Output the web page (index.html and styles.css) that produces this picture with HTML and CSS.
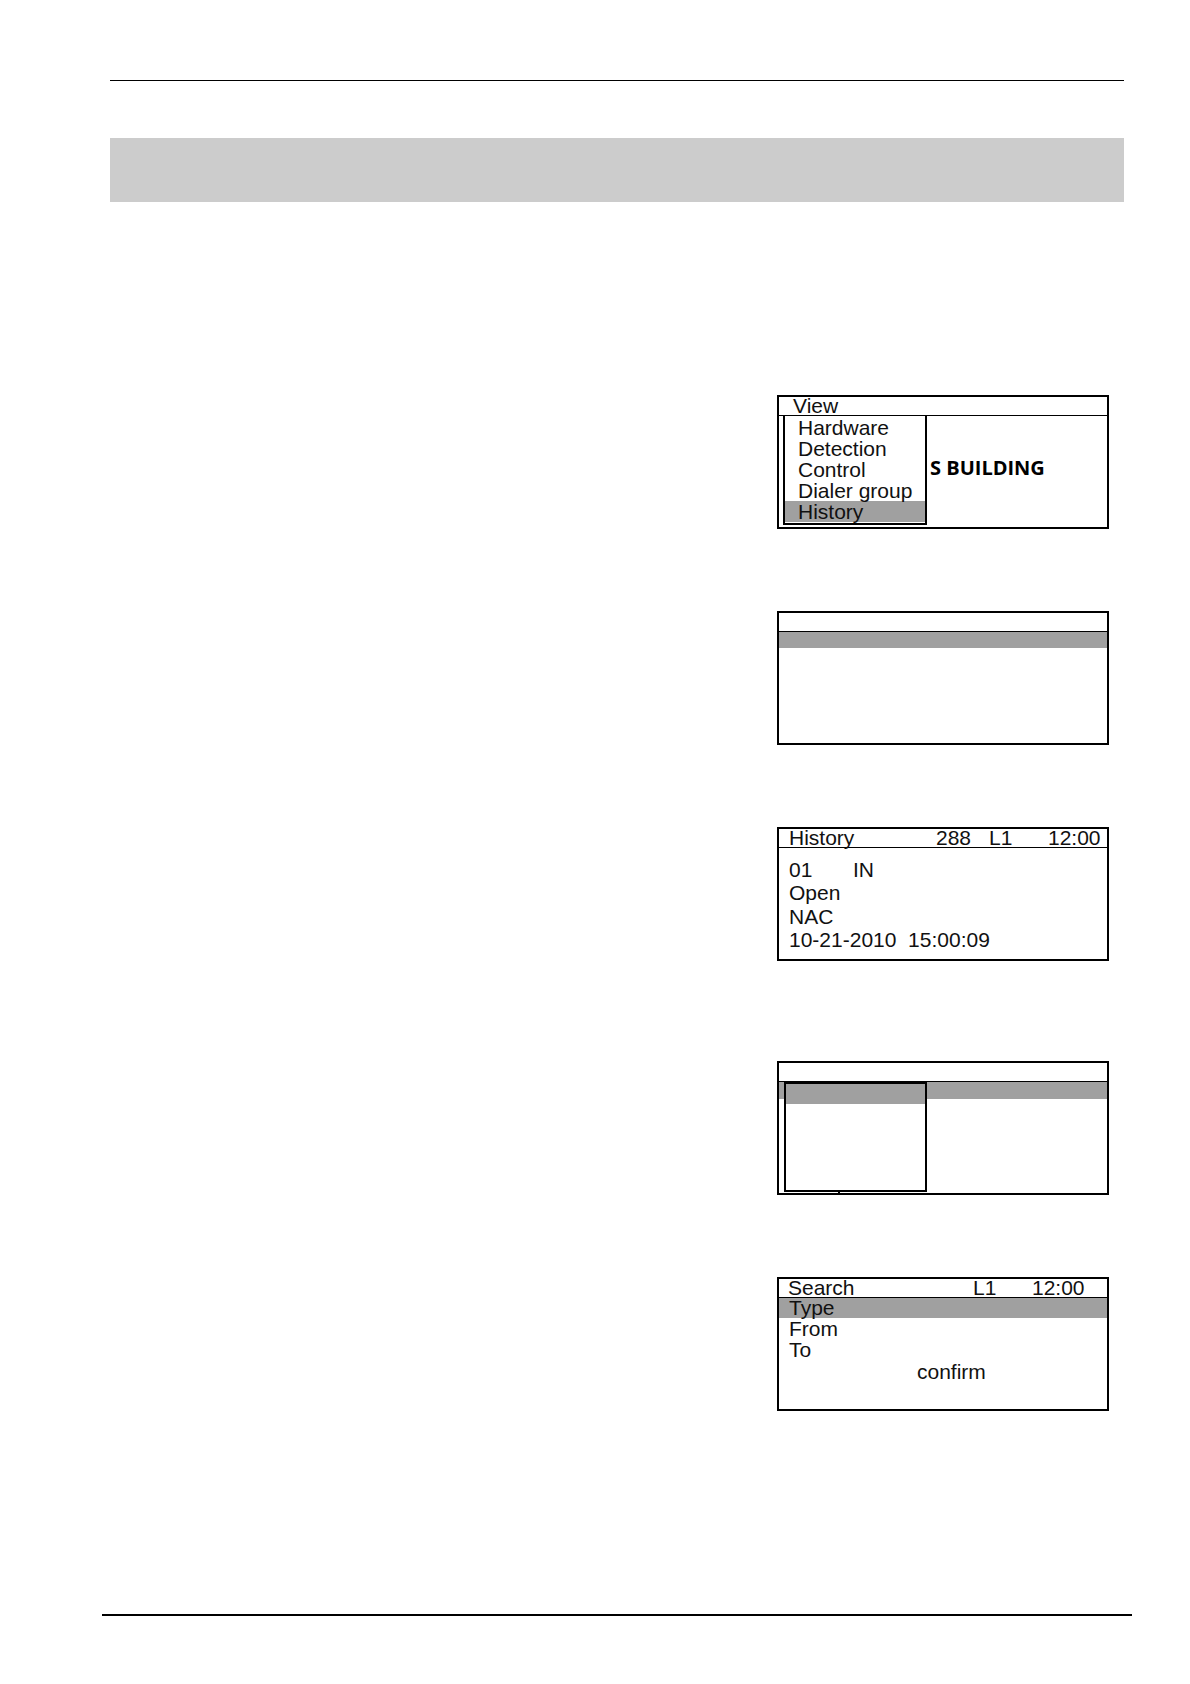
FILE: index.html
```html
<!DOCTYPE html>
<html lang="en">
<head>
<meta charset="utf-8">
<title>History menu screens</title>
<link rel="stylesheet" href="styles.css">
</head>
<body>
<div class="page">
  <div class="top-rule"></div>
  <div class="title-bar"></div>

  <div class="screens">
    <!-- Screen 1: View menu -->
    <div class="screen">
      <div class="screen-head head-view">View</div>
      <div class="screen-body body-menu">
        <ul class="menu">
          <li>Hardware</li>
          <li>Detection</li>
          <li>Control</li>
          <li>Dialer group</li>
          <li class="is-selected">History</li>
        </ul>
        <div class="building">S BUILDING</div>
      </div>
    </div>

    <!-- Screen 2: blank list -->
    <div class="screen">
      <div class="screen-head"></div>
      <div class="screen-body">
        <div class="bar bar-16"></div>
      </div>
    </div>

    <!-- Screen 3: History record -->
    <div class="screen">
      <div class="screen-head head-history">
        <span>History</span><span>288</span><span>L1</span><span>12:00</span>
      </div>
      <div class="screen-body body-record">
        <div class="rec-line"><span class="rec-num">01</span><span>IN</span></div>
        <div class="rec-line">Open</div>
        <div class="rec-line">NAC</div>
        <div class="rec-line rec-date">10-21-2010  15:00:09</div>
      </div>
    </div>

    <!-- Screen 4: dropdown over list -->
    <div class="screen screen-spaced">
      <div class="screen-head"></div>
      <div class="screen-body">
        <div class="bar bar-17"></div>
      </div>
      <div class="popup">
        <div class="popup-sel"></div>
      </div>
      <span class="tick"></span>
    </div>

    <!-- Screen 5: Search -->
    <div class="screen">
      <div class="screen-head head-search">
        <span>Search</span><span>L1</span><span>12:00</span>
      </div>
      <div class="screen-body body-search">
        <div class="s-row s-type">Type</div>
        <div class="s-row">From</div>
        <div class="s-row">To</div>
        <div class="s-row s-confirm">confirm</div>
      </div>
    </div>
  </div>

  <div class="bottom-rule"></div>
</div>
</body>
</html>
```

FILE: styles.css
```css
html, body {
  margin: 0;
  padding: 0;
  background: #ffffff;
}

body {
  font-family: "Liberation Sans", Arial, sans-serif;
  color: #111111;
}

.page {
  width: 1190px;
  min-height: 1684px;
  padding-top: 80px;
  box-sizing: border-box;
  display: flex;
  flex-direction: column;
}

.top-rule {
  margin: 0 66px 0 110px;
  border-top: 1px solid #000000;
}

.title-bar {
  margin: 57px 66px 0 110px;
  height: 64px;
  background: #cccccc;
}

.screens {
  margin-top: 193px;
  margin-left: 777px;
  width: 332px;
  display: flex;
  flex-direction: column;
  gap: 82px;
}

.screen {
  position: relative;
  height: 134px;
  box-sizing: border-box;
  border: 2px solid #000000;
  display: flex;
  flex-direction: column;
  font-size: 21px;
}

.screen-spaced {
  margin-top: 18px;
}

.screen-head {
  height: 19px;
  box-sizing: border-box;
  line-height: 17px;
  padding-bottom: 2px;
  border-bottom: 1px solid #000000;
  white-space: nowrap;
  overflow: visible;
  flex: none;
}

.screen-body {
  flex: 1;
  min-height: 0;
}

/* Screen 1 */
.head-view {
  padding-left: 14px;
}

.body-menu {
  display: flex;
  align-items: flex-start;
}

.menu {
  list-style: none;
  margin: 0 0 0 4px;
  padding: 1px 0 1px 0;
  width: 144px;
  box-sizing: border-box;
  border: 2px solid #000000;
  border-top: none;
}

.menu li {
  height: 21px;
  line-height: 21px;
  padding-left: 13px;
  white-space: nowrap;
}

.menu li.is-selected {
  background: #a0a0a0;
}

.building {
  margin: 41px 0 0 3px;
  font-family: "Open Sans", "Liberation Sans", sans-serif;
  font-weight: 700;
  font-size: 20px;
  line-height: 21px;
  color: #000000;
  white-space: nowrap;
}

/* highlight bars */
.bar {
  background: #a0a0a0;
}

.bar-16 {
  height: 16px;
}

.bar-17 {
  height: 17px;
}

/* Screen 3 */
.head-history {
  display: grid;
  grid-template-columns: 147px 53px 59px auto;
  padding-left: 10px;
}

.body-record {
  padding: 10px 0 0 10px;
}

.rec-line {
  height: 23.3px;
  line-height: 23.3px;
  white-space: pre;
}

.rec-num {
  display: inline-block;
  width: 64px;
}

/* Screen 4 popup (overlay menu) */
.popup {
  position: absolute;
  left: 5px;
  top: 19px;
  width: 143px;
  height: 110px;
  box-sizing: border-box;
  border: 2px solid #000000;
  background: #ffffff;
}

.popup-sel {
  height: 20px;
  background: #a0a0a0;
}

.tick {
  position: absolute;
  left: 59px;
  top: 129px;
  width: 2px;
  height: 2px;
  background: #000000;
}

/* Screen 5 */
.head-search {
  display: grid;
  grid-template-columns: 185px 59px auto;
  padding-left: 9px;
}

.body-search {
  display: flex;
  flex-direction: column;
}

.s-row {
  height: 21px;
  line-height: 21px;
  padding-left: 10px;
}

.s-type {
  height: 20px;
  line-height: 20px;
  background: #a0a0a0;
}

.s-confirm {
  height: 24px;
  line-height: 24px;
  padding-left: 138px;
}

.bottom-rule {
  margin: 203px 58px 0 102px;
  border-top: 2px solid #000000;
}
```
